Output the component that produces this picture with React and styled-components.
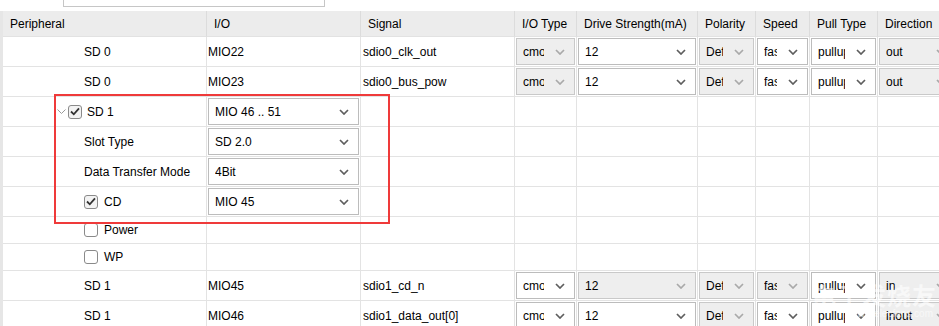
import React from "react";
import styled, { createGlobalStyle } from "styled-components";

const GlobalStyle = createGlobalStyle`
  html, body { margin: 0; padding: 0; background: #fff; }
  body {
    font-family: "Liberation Sans", Arial, sans-serif;
    font-size: 12px;
    color: #000;
    overflow: hidden;
  }
  * { box-sizing: border-box; }
`;

const COLS = [204, 154, 154, 62, 121, 58, 54, 68, 80];

const Page = styled.div`
  position: relative;
  width: 939px;
  height: 326px;
  overflow: hidden;
  background: #fff;
`;

const TopBar = styled.div`
  height: 11px;
  padding-left: 63px;
`;

const SearchField = styled.div`
  width: 262px;
  height: 7px;
  border: 1px solid #c6c6c6;
  border-top: none;
  background: #fff;
`;

const Table = styled.div`
  display: grid;
  grid-template-columns: ${COLS.map((c) => c + "px").join(" ")};
  border-left: 3px solid #e6e6e6;
  width: max-content;
`;

const HeaderCell = styled.div`
  height: 26px;
  background: #ececec;
  border-right: 1px solid #dcdcdc;
  border-bottom: 1px solid #e2e2e2;
  display: flex;
  align-items: center;
  padding-left: 7px;
  white-space: nowrap;
  overflow: hidden;
  color: #000;
`;

const Cell = styled.div`
  height: ${(p) => p.$h || 30}px;
  border-right: 1px solid #e3e3e3;
  border-bottom: 1px solid #e3e3e3;
  display: flex;
  align-items: center;
  padding: ${(p) => (p.$select ? "1px" : `0 0 0 ${p.$pl ?? 2}px`)};
  white-space: nowrap;
  overflow: hidden;
`;

const SelectBox = styled.div`
  flex: 1;
  height: 100%;
  min-width: 0;
  display: flex;
  align-items: center;
  border: 1px solid ${(p) => (p.$disabled ? "#c9c9c9" : "#bcbcbc")};
  background: ${(p) => (p.$disabled ? "#eeeeee" : "#ffffff")};
  padding-left: 6px;
`;

const SelectText = styled.span`
  flex: 1;
  min-width: 0;
  overflow: hidden;
  white-space: nowrap;
  color: #000;
`;

const ChevronZone = styled.span`
  width: 30px;
  flex: none;
  display: flex;
  align-items: center;
  justify-content: center;
  padding-left: 2px;
`;

const TreeLabel = styled.div`
  display: flex;
  align-items: center;
`;

const Expander = styled.span`
  width: 12px;
  display: flex;
  align-items: center;
  justify-content: center;
  margin-right: 1px;
`;

const CheckBox = styled.span`
  width: 14px;
  height: 14px;
  border: 1px solid #8a8a8a;
  border-radius: 3px;
  background: ${(p) => (p.$checked ? "#f3f3f3" : "#ffffff")};
  display: inline-flex;
  align-items: center;
  justify-content: center;
  margin-right: ${(p) => p.$gap ?? 6}px;
  flex: none;
`;

const RedBox = styled.div`
  position: absolute;
  left: 54px;
  top: 94px;
  width: 336px;
  height: 130px;
  border: 2px solid #ef3a3a;
  pointer-events: none;
`;

const Watermark = styled.div`
  position: absolute;
  left: 812px;
  top: 281px;
  display: flex;
  flex-direction: column;
  align-items: flex-end;
  color: rgba(255, 255, 255, 0.6);
  pointer-events: none;
`;

const WatermarkTitle = styled.span`
  font-family: "Noto Sans CJK SC", sans-serif;
  font-weight: 700;
  font-size: 24px;
  line-height: 27px;
  letter-spacing: 1px;
`;

const WatermarkSub = styled.span`
  font-family: "Liberation Sans", Arial, sans-serif;
  font-size: 10px;
  line-height: 11px;
  margin-right: 4px;
`;

const Chevron = ({ disabled }) => (
  <svg width="10" height="6" viewBox="0 0 10 6">
    <path
      d="M1 1 L5 5 L9 1"
      fill="none"
      stroke={disabled ? "#a9a9a9" : "#5e5e5e"}
      strokeWidth="1.7"
    />
  </svg>
);

const Check = () => (
  <svg width="10" height="9" viewBox="0 0 10 9">
    <path d="M1 4.5 L3.8 7.3 L9 1.3" fill="none" stroke="#333" strokeWidth="1.8" />
  </svg>
);

const ExpandIcon = () => (
  <svg width="9" height="5" viewBox="0 0 9 5">
    <path d="M0.5 0.5 L4.5 4.5 L8.5 0.5" fill="none" stroke="#9a9a9a" strokeWidth="1" />
  </svg>
);

const Select = ({ value, disabled }) => (
  <SelectBox $disabled={disabled}>
    <SelectText>{value}</SelectText>
    <ChevronZone>
      <Chevron disabled={disabled} />
    </ChevronZone>
  </SelectBox>
);

const headers = [
  "Peripheral",
  "I/O",
  "Signal",
  "I/O Type",
  "Drive Strength(mA)",
  "Polarity",
  "Speed",
  "Pull Type",
  "Direction",
];

const pinRows = [
  {
    p: "SD 0",
    io: "MIO22",
    sig: "sdio0_clk_out",
    sel: [["cmos33", 1], ["12", 0], ["Default", 1], ["fast", 0], ["pullup", 0], ["out", 1]],
  },
  {
    p: "SD 0",
    io: "MIO23",
    sig: "sdio0_bus_pow",
    sel: [["cmos33", 1], ["12", 0], ["Default", 1], ["fast", 0], ["pullup", 0], ["out", 1]],
  },
];

const pinRowsBottom = [
  {
    p: "SD 1",
    io: "MIO45",
    sig: "sdio1_cd_n",
    sel: [["cmos33", 0], ["12", 1], ["Default", 1], ["fast", 1], ["pullup", 0], ["in", 1]],
  },
  {
    p: "SD 1",
    io: "MIO46",
    sig: "sdio1_data_out[0]",
    sel: [["cmos33", 0], ["12", 0], ["Default", 1], ["fast", 0], ["pullup", 0], ["inout", 1]],
  },
];

const PinRow = ({ row }) => (
  <>
    <Cell $pl={81}>{row.p}</Cell>
    <Cell $pl={1}>{row.io}</Cell>
    <Cell $pl={2}>{row.sig}</Cell>
    {row.sel.map(([v, d], i) => (
      <Cell key={i} $select>
        <Select value={v} disabled={!!d} />
      </Cell>
    ))}
  </>
);

const EmptyCells = ({ count, h }) =>
  Array.from({ length: count }).map((_, i) => <Cell key={i} $h={h} />);

const ConfigRow = ({ label, value, h }) => (
  <>
    <Cell $pl={label.pl} $h={h}>
      {label.node}
    </Cell>
    {value ? (
      <Cell $select $h={h}>
        <Select value={value} />
      </Cell>
    ) : (
      <Cell $h={h} />
    )}
    <EmptyCells count={7} h={h} />
  </>
);

export default function App() {
  return (
    <Page>
      <GlobalStyle />
      <TopBar>
        <SearchField />
      </TopBar>
      <Table>
        {headers.map((h) => (
          <HeaderCell key={h}>{h}</HeaderCell>
        ))}
        {pinRows.map((r, i) => (
          <PinRow key={"a" + i} row={r} />
        ))}
        <ConfigRow
          label={{
            pl: 52,
            node: (
              <TreeLabel>
                <Expander>
                  <ExpandIcon />
                </Expander>
                <CheckBox $checked $gap={5}>
                  <Check />
                </CheckBox>
                SD 1
              </TreeLabel>
            ),
          }}
          value="MIO 46 .. 51"
        />
        <ConfigRow label={{ pl: 81, node: "Slot Type" }} value="SD 2.0" />
        <ConfigRow label={{ pl: 81, node: "Data Transfer Mode" }} value="4Bit" />
        <ConfigRow
          label={{
            pl: 81,
            node: (
              <TreeLabel>
                <CheckBox $checked>
                  <Check />
                </CheckBox>
                CD
              </TreeLabel>
            ),
          }}
          value="MIO 45"
        />
        <ConfigRow
          h={27}
          label={{
            pl: 81,
            node: (
              <TreeLabel>
                <CheckBox />
                Power
              </TreeLabel>
            ),
          }}
        />
        <ConfigRow
          h={27}
          label={{
            pl: 81,
            node: (
              <TreeLabel>
                <CheckBox />
                WP
              </TreeLabel>
            ),
          }}
        />
        {pinRowsBottom.map((r, i) => (
          <PinRow key={"b" + i} row={r} />
        ))}
      </Table>
      <RedBox />
      <Watermark>
        <WatermarkTitle>电子发烧友</WatermarkTitle>
        <WatermarkSub>www.elecfans.com</WatermarkSub>
      </Watermark>
    </Page>
  );
}
